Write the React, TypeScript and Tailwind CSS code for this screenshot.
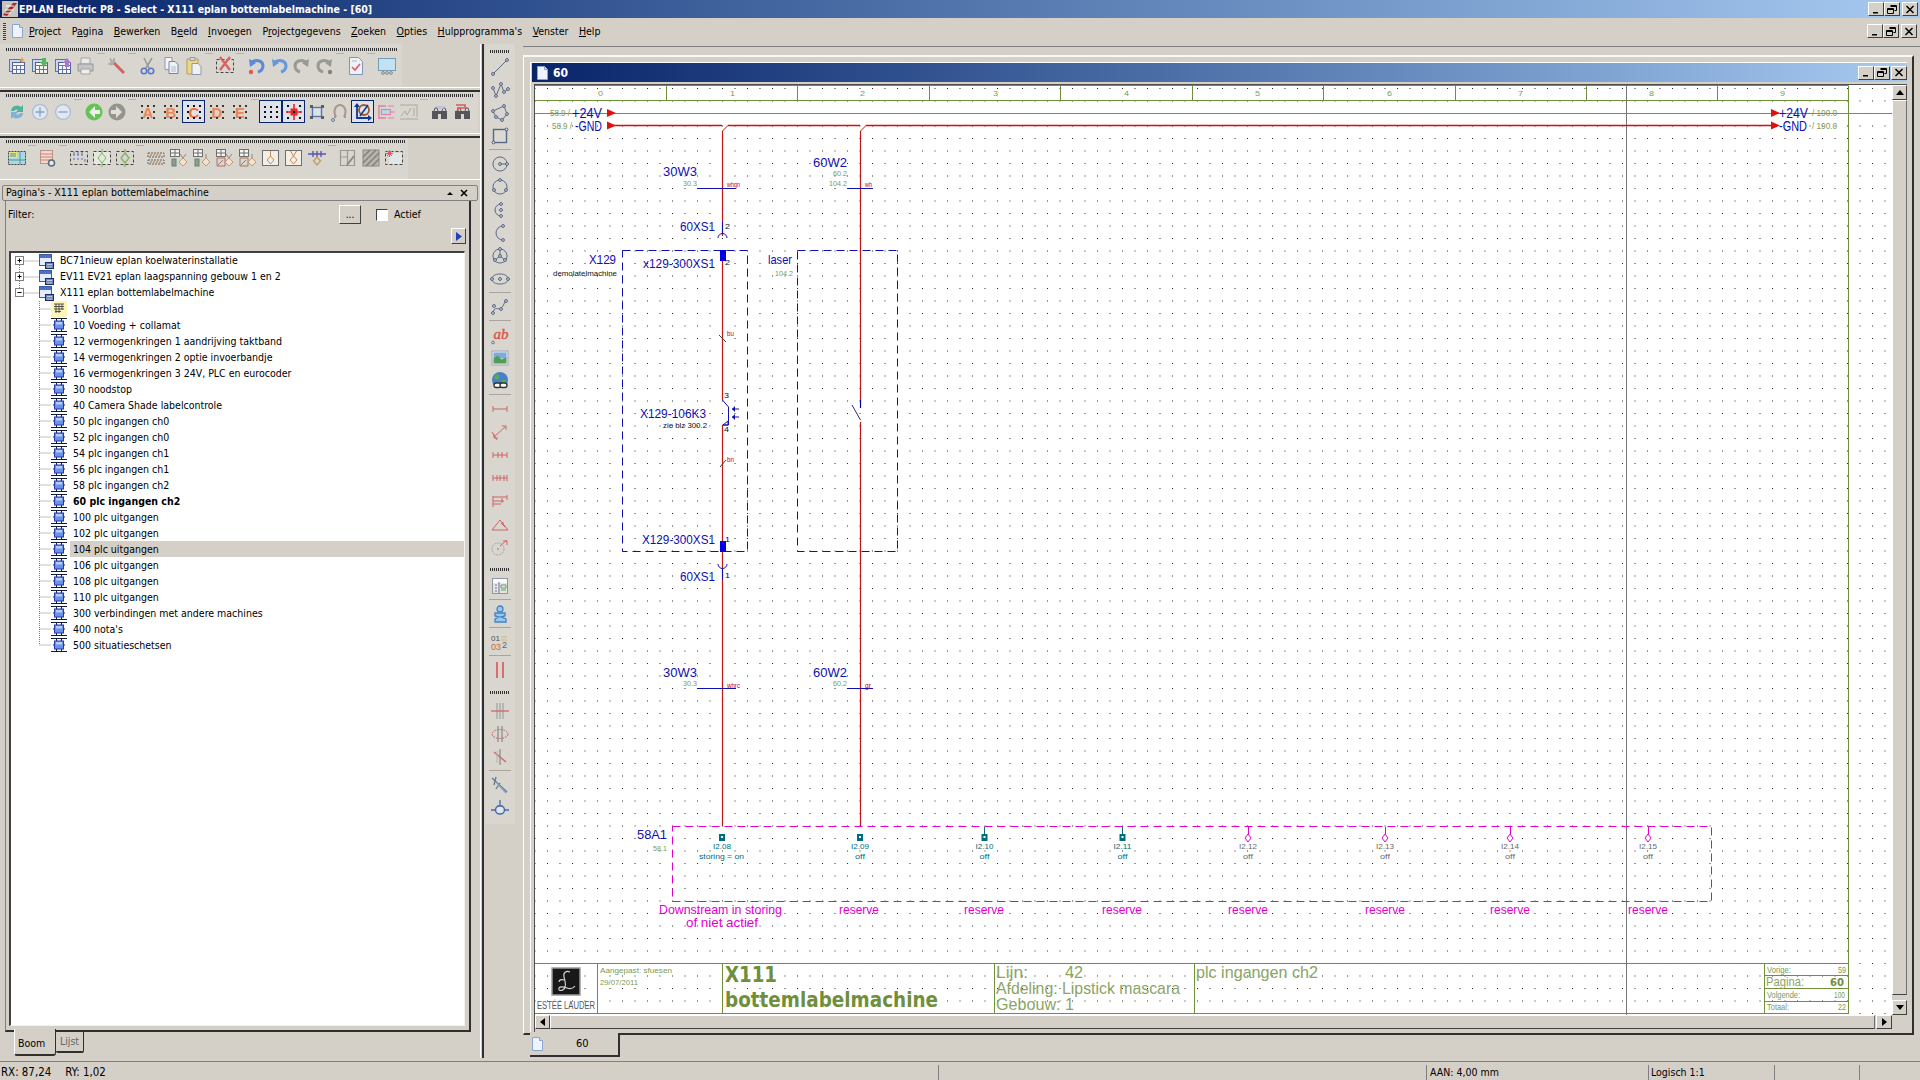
import type { ReactNode } from "react";

const BLUE = "#1010b0";
const GREEN = "#7c9a52";
const DGREEN = "#6f8f3a";
const LGREEN = "#8aa565";
const RED = "#cc0000";
const MAG = "#e000d0";
const TEAL = "#006c80";
const GRAY = "#686868";

function Ico({ children, size = 20 }: { children: ReactNode; size?: number }) {
  return (
    <svg width={size} height={size} viewBox="0 0 20 20" fill="none" className="block">
      {children}
    </svg>
  );
}

// ---- horizontal toolbar icons ----

const stack = (accent: ReactNode) => (
  <Ico>
    <rect x="2.5" y="3.5" width="11" height="12" fill="#c9d6ee" stroke="#3c5c9c" />
    <rect x="5.5" y="6.5" width="12" height="11" fill="#fff" stroke="#2c4488" />
    <path d="M5.5 9.5h12M9.5 9.5v8M13.5 9.5v8M5.5 13.5h12" stroke="#44619e" />
    {accent}
  </Ico>
);

const undo = (flip: boolean, color: string, dot?: string) => (
  <Ico>
    <g transform={flip ? "matrix(-1 0 0 1 20 0)" : undefined}>
      <path d="M6 6c5-3 11-1 11 4 0 3-2 5-5 6" stroke={color} strokeWidth="3" />
      <path d="M3 3l1 8 6-4z" fill={color} />
    </g>
    {dot && <circle cx={flip ? 15 : 5} cy="16" r="2.2" fill={dot} />}
  </Ico>
);

const letter = (c: string) => (
  <Ico>
    <text x="10" y="15.5" fontSize="15" fontWeight="700" textAnchor="middle" fill="#f0703a" fontFamily="Liberation Sans, sans-serif">
      {c}
    </text>
    <path d="M3 3h2v2H3zM9 3h2v2H9zM15 3h2v2h-2zM3 9h2v2H3zM15 9h2v2h-2zM3 15h2v2H3zM9 15h2v2H9zM15 15h2v2h-2z" fill="#111" />
  </Ico>
);

const binoculars = (flag?: boolean) => (
  <Ico>
    <rect x="2" y="9" width="6" height="8" fill="#33363f" />
    <rect x="11" y="9" width="6" height="8" fill="#33363f" />
    <rect x="7" y="9" width="5" height="3" fill="#33363f" />
    <path d="M4 9l1-3h2l1 3M12 9l1-3h2l1 3" stroke="#33363f" />
    {flag ? <path d="M3 3h9v3H5v3" stroke="#d04040" strokeWidth="1.6" /> : <path d="M6 4h10l-3 3H8z" fill="#b8bce0" />}
  </Ico>
);

const tableDiamond = (variant: number) => (
  <Ico>
    <rect x="1.5" y="1.5" width="9" height="7" fill="#fff" stroke="#555" />
    <path d="M6 1.5v7M1.5 5h9" stroke="#555" />
    {variant < 2 ? (
      <rect x="3" y="11" width="4" height="7" fill="#888" stroke="#3c7c4c" />
    ) : (
      <path d="M2 10h8v8H2z M3 17l5-5" stroke="#a05a50" />
    )}
    <path d="M14 10l4 4-4 4-4-4z" stroke="#c98a50" fill="#f4e8d8" />
    <path d={variant % 2 ? "M14 10V6" : "M11 6l3 4 3-4"} stroke="#777" />
  </Ico>
);

const boxDiamond = (up: boolean) => (
  <Ico>
    <rect x="1.5" y="2.5" width="16" height="15" fill="#faf6ec" stroke="#555" />
    <path d="M9.5 8l3.5 4-3.5 4L6 12z" stroke="#c07838" />
    <path d={up ? "M9.5 8l-3-5M9.5 8l3-5" : "M9.5 8V3"} stroke="#c07838" />
  </Ico>
);

const dashed = (inner: ReactNode) => (
  <Ico>
    <rect x="1.5" y="3.5" width="17" height="13" stroke="#222" strokeDasharray="3 2" />
    {inner}
  </Ico>
);

const toolbarOne: ReactNode[][] = [
  [
    stack(<path d="M15 1l1 2 2 1-2 1-1 2-1-2-2-1 2-1z" fill="#f09030" />),
    stack(<path d="M12 2h4v4h2l-4 5-4-5h2z" fill="#38b048" />),
    stack(<path d="M12 11h4V7h2l-4-5-4 5h2z" fill="#a060d0" />),
    <Ico>
      <path d="M5 2h9v6H5z" fill="#eef0f4" stroke="#999" />
      <path d="M2 8h15v7H2z" fill="#bfc2c8" stroke="#888" />
      <path d="M5 13h9v5H5z" fill="#f4f4f4" stroke="#999" />
    </Ico>,
  ],
  [
    <Ico>
      <path d="M6 6l11 11" stroke="#d04848" strokeWidth="3" />
      <path d="M3 2l3 3 1-3 1 4-3 3-4-1 3-1z" fill="#a8a8a8" stroke="#888" strokeWidth=".5" />
    </Ico>,
  ],
  [
    <Ico>
      <path d="M6 2l5 10M14 2L8 12" stroke="#888" strokeWidth="1.5" />
      <circle cx="6" cy="15" r="2.7" stroke="#3860c8" strokeWidth="1.6" />
      <circle cx="13" cy="15" r="2.7" stroke="#3860c8" strokeWidth="1.6" />
    </Ico>,
    <Ico>
      <path d="M4 1.5h7v12H4z" fill="#fff" stroke="#7a8aa8" />
      <path d="M8 5.5h6l3 3v9H8z" fill="#f4f8ff" stroke="#5470a8" />
      <path d="M10 11h5M10 13h5M10 15h5" stroke="#a4b4d0" />
    </Ico>,
    <Ico>
      <path d="M3 3h11v15H3z" fill="#f4d870" stroke="#b09040" />
      <path d="M6 1.500h5v3H6z" fill="#ddd" stroke="#888" />
      <path d="M8 7.500h6l3 3v8H8z" fill="#f8f8f8" stroke="#7a8ab0" />
    </Ico>,
  ],
  [dashed(<path d="M5 1l10 13M15 1L5 14" stroke="#d84848" strokeWidth="2.4" />)],
  [undo(false, "#3878d8", "#e83838"), undo(false, "#4888e0"), undo(true, "#8a8a88"), undo(true, "#8a8a88", "#707070")],
  [
    <Ico>
      <path d="M3.5 1.500h9l4 4v13h-13z" fill="#f4f8ff" stroke="#6a84b0" />
      <path d="M6 11l3 3 5-6" stroke="#d84058" strokeWidth="1.6" />
      <path d="M6 5h5" stroke="#a0b0cc" />
    </Ico>,
  ],
  [
    <Ico>
      <rect x="1.5" y="2.500" width="17" height="12" fill="#bfe4f8" stroke="#5a90b8" />
      <circle cx="6" cy="17" r="1.400" stroke="#777" />
      <circle cx="10" cy="17" r="1.400" stroke="#777" />
      <circle cx="14" cy="17" r="1.400" stroke="#777" />
    </Ico>,
  ],
];

const circleBtn = (sign: string) => (
  <Ico>
    <circle cx="10" cy="10" r="7.500" fill="#e4ecf6" stroke="#a8bcd8" strokeWidth="1.500" />
    <path d={sign} stroke="#6f92c8" strokeWidth="1.300" />
  </Ico>
);

const toolbarTwo: ReactNode[][] = [
  [
    <Ico>
      <path d="M4 9a6 6 0 0 1 10-4l2-2v7h-7l2-2a3 3 0 0 0-4 1z" fill="#2fa890" />
      <path d="M16 11a6 6 0 0 1-10 4l-2 2v-7h7l-2 2a3 3 0 0 0 4-1z" fill="#6aa8d8" />
    </Ico>,
    circleBtn("M10 5.500v9M5.500 10h9"),
    circleBtn("M5.500 10h9"),
  ],
  [
    <Ico>
      <circle cx="10" cy="10" r="8.500" fill="#48c038" />
      <path d="M11 4l-6 6 6 6v-4h5V8h-5z" fill="#f4f8f0" />
    </Ico>,
    <Ico>
      <circle cx="10" cy="10" r="8.500" fill="#85857f" />
      <path d="M9 4l6 6-6 6v-4H4V8h5z" fill="#e4e2dc" />
    </Ico>,
  ],
  [letter("A"), letter("B"), letter("C"), letter("D"), letter("E")],
  [
    <Ico>
      <path d="M3 4h2v2H3zM9 4h2v2H9zM15 4h2v2h-2zM3 9h2v2H3zM9 9h2v2H9zM15 9h2v2h-2zM3 14h2v2H3zM9 14h2v2H9zM15 14h2v2h-2z" fill="#111" />
    </Ico>,
    <Ico>
      <path d="M3 3h2v2H3zM15 3h2v2h-2zM3 15h2v2H3zM15 15h2v2h-2zM3 9h1v2H3zM16 9h1v2h-1z" fill="#111" />
      <path d="M2 10h16M10 2v16" stroke="#e82828" strokeWidth="1.600" />
      <rect x="6.500" y="6.500" width="7" height="7" fill="#e82828" />
      <rect x="9" y="9" width="2" height="2" fill="#111" />
    </Ico>,
    <Ico>
      <rect x="5.500" y="5.500" width="9" height="9" stroke="#3860a0" strokeWidth="1.400" fill="#dfe6f0" />
      <path d="M3 3h3v3H3zM14 3h3v3h-3zM3 14h3v3H3zM14 14h3v3h-3z" fill="#30405c" />
    </Ico>,
    <Ico>
      <path d="M6 15C2 7 7 3 10 3s8 4 4 12M6 15h-2M14 15h2" stroke="#a08878" strokeWidth="2" />
      <circle cx="3" cy="18" r="1.500" stroke="#4060a0" />
    </Ico>,
    <Ico>
      <path d="M4 3v13h13" stroke="#103890" strokeWidth="1.800" />
      <path d="M1 5l3-4 3 4zM15 13l4 3-4 3z" fill="#103890" />
      <circle cx="11" cy="8" r="5" stroke="#a05828" strokeWidth="1.800" />
      <path d="M7 14l8-11" stroke="#103890" strokeWidth="1.500" />
    </Ico>,
    <Ico>
      <path d="M3 3v14M3 4h7M3 16h7" stroke="#e86898" strokeWidth="1.400" />
      <rect x="5.500" y="7.500" width="9" height="5" fill="#a8d8f0" stroke="#e86898" />
      <path d="M14 10h5M12 4h6M12 16h6" stroke="#e86898" />
    </Ico>,
    <Ico>
      <path d="M1 3h18M1 17h18M2 14l4-5 2 4 4-7M15 6v8M18 4v11" stroke="#a0a098" />
    </Ico>,
  ],
  [binoculars(), binoculars(true)],
];

const toolbarThree: ReactNode[][] = [
  [
    <Ico>
      <rect x="1.500" y="3.500" width="17" height="13" stroke="#222" strokeDasharray="2 1" fill="#9fdde0" />
      <rect x="2" y="4" width="8" height="6" fill="#f0e860" />
      <path d="M3 6h6M3 8h6M13 4v12M2 12h16" stroke="#3a7c9c" />
    </Ico>,
  ],
  [
    <Ico>
      <rect x="2.500" y="2.500" width="12" height="13" fill="#f4dcd4" stroke="#a88878" />
      <path d="M2.500 6h12M2.500 9h12M2.500 12h12" stroke="#d86858" />
      <circle cx="13.500" cy="15" r="3" fill="#e8ecf0" stroke="#38506c" strokeWidth="1.500" />
    </Ico>,
  ],
  [
    dashed(<path d="M4 7h2M8 7h2M12 7h2M4 11h2M8 11h2M12 11h2M16 11v3M5 4v3M9 4v3M13 4v3" stroke="#3858b8" />),
    dashed(
      <>
        <rect x="2" y="4" width="16" height="12" fill="#e8f0e4" />
        <path d="M10 5l4 5-4 5-4-5zM10 1v4M10 15v4" stroke="#6fa848" />
      </>,
    ),
    dashed(<path d="M10 5l4 5-4 5-4-5zM10 1v4M10 15v4" stroke="#6fa848" strokeWidth="1.300" />),
  ],
  [
    <Ico>
      <path d="M2 5h16v4H2zM2 12h16v4H2z" stroke="#444" strokeDasharray="2 1" />
      <path d="M4 7h12M4 14h12" stroke="#d07838" strokeDasharray="2 1" strokeWidth="1.400" />
    </Ico>,
    tableDiamond(0),
    tableDiamond(1),
    tableDiamond(2),
    tableDiamond(3),
    boxDiamond(false),
    boxDiamond(true),
    <Ico>
      <path d="M1 6h18M6 3v6M10 3v6M14 3v6" stroke="#3838a8" strokeWidth="1.400" />
      <path d="M10 9l3.500 4-3.500 4-3.500-4z" stroke="#c09048" strokeWidth="1.400" />
    </Ico>,
  ],
  [
    <Ico>
      <path d="M2.500 2.500h14v15h-14zM2.500 9h7M9.500 2.500v15" stroke="#8a8a84" strokeWidth="1.200" />
      <path d="M9 17l7-9" stroke="#777" strokeWidth="2" />
    </Ico>,
    <Ico>
      <rect x="2" y="2" width="16" height="16" fill="#b0aea8" stroke="#777" />
      <path d="M2 9l7-7M2 15l13-13M5 18L18 5M11 18l7-7" stroke="#6f6f69" strokeWidth="1.600" />
    </Ico>,
    dashed(
      <>
        <rect x="5" y="5" width="13" height="11" fill="#e4eaf0" />
        <path d="M3 3l5 5M8 3L3 8M5.500 2v7M2 5.500h7" stroke="#e83848" />
      </>,
    ),
  ],
];

// ---- vertical toolbar icons ----

const VS = "#4c5d80";
const node = (x: number, y: number) => <circle cx={x} cy={y} r="1.400" fill="#e4e8f0" stroke="#3c4c70" />;

const v = (d: string, nodes: number[][], extra?: ReactNode) => (
  <Ico>
    <path d={d} stroke={VS} />
    {extra}
    {nodes.map(([x, y], i) => (
      <g key={i}>{node(x, y)}</g>
    ))}
  </Ico>
);

const dim = (d: string) => (
  <Ico>
    <path d={d} stroke="#d05858" />
  </Ico>
);

const groupOne: ReactNode[] = [
  v("M3 17L17 3", [[3, 17], [17, 3]]),
  v("M3 8l3 8 5-12 3 8 4-3", [[3, 8], [6, 16], [11, 4], [14, 12], [18, 9]]),
  v("M3 8l11-5 3 8-5 6-6-3z", [[3, 8], [14, 3], [17, 11], [12, 17], [6, 14]]),
  <Ico>
    <rect x="3.500" y="3.500" width="13" height="13" fill="#dcdad4" stroke={VS} strokeWidth="1.400" />
    {node(16.5, 3.5)}
    {node(3.5, 16.5)}
  </Ico>,
];
const groupTwo: ReactNode[] = [
  v("M10 3a7 7 0 1 1-.01 0M10 10h7", [[10, 10], [17, 10]]),
  v("M10 3a7 7 0 1 1-.01 0", [[10, 3], [4, 13], [16, 13]]),
  v("M11 4a6 6 0 0 0 0 12", [[11, 4], [11, 10], [11, 16]]),
  v("M13 3a7 7 0 0 0 0 14", [[13, 3], [13, 17]]),
  v("M10 3a7 7 0 1 1-.01 0M10 3v7l-5 4M10 10l5 4", [[10, 3], [10, 10], [5, 14], [15, 14]]),
  v("M10 5c5 0 8 2 8 5s-3 5-8 5-8-2-8-5 3-5 8-5z", [[2, 10], [10, 10], [18, 10]]),
];
const groupThree: ReactNode[] = [v("M3 16c1-7 5-3 8-5s3-6 5-7", [[3, 16], [4, 9], [11, 12], [16, 4]])];
const groupFour: ReactNode[] = [
  <Ico>
    <text x="11" y="14" fontSize="15" fontWeight="400" fontStyle="italic" textAnchor="middle" fill="#d84838" stroke="#d84838" strokeWidth=".4" fontFamily="Liberation Serif, serif">
      ab
    </text>
    <circle cx="3" cy="17.500" r="1.400" stroke="#5070a0" />
  </Ico>,
  <Ico>
    <rect x="2" y="3" width="16" height="14" fill="#eee" stroke="#98a0ac" />
    <rect x="3.500" y="4.500" width="13" height="6" fill="#70a8e0" />
    <path d="M3.500 15.500v-5l4-3 4 4 5-2v6z" fill="#3f9848" />
  </Ico>,
  <Ico>
    <circle cx="10" cy="9" r="8" fill="#3a78c8" />
    <path d="M5 4c3-2 5 1 4 3s-4 2-5 0zM12 9c3-1 5 0 4 3l-4 2z" fill="#48a848" />
    <rect x="4" y="12" width="7" height="4.500" rx="2.200" stroke="#222" strokeWidth="1.300" fill="#fff" />
    <rect x="10" y="12" width="7" height="4.500" rx="2.200" stroke="#222" strokeWidth="1.300" fill="#fff" />
  </Ico>,
];
const groupFive: ReactNode[] = [
  dim("M3 7v6M17 7v6M3 10h14"),
  dim("M4 15L15 5M12 4l4 0 0 4M4 12l0 4 4 0M2 10l5 8"),
  dim("M3 7v6M8 7v6M12 7v6M17 7v6M3 10h14"),
  dim("M3 7v6M7 7v6M10 7v6M14 7v6M17 7v6M3 10h14"),
  dim("M3 5v11M17 4v5M3 6h14M3 10h11M3 13h8M12 7v5"),
  dim("M2 16h16L10 6zM11 9l4 4M13 8v3"),
  <Ico>
    <circle cx="8" cy="12" r="6" stroke="#a0a0a0" strokeDasharray="2 1" />
    <circle cx="8" cy="12" r=".8" fill="#666" />
    <path d="M10 9l7-6M13 4h4v4" stroke="#d05858" />
  </Ico>,
];
const groupSix: ReactNode[] = [
  <Ico>
    <rect x="2.500" y="2.500" width="15" height="15" fill="#e8e8e4" stroke="#8890a0" />
    <path d="M3 3h14v4H3z" fill="#fff" />
    <path d="M9 6v11M5 9h2M5 12h2M5 15h2" stroke="#5a6a8a" />
    <path d="M11 9h5v3h-5zM11 14h5" stroke="#48a060" />
  </Ico>,
];
const groupSeven: ReactNode[] = [
  <Ico>
    <circle cx="10" cy="5" r="3" fill="#90c8f0" stroke="#3878c0" strokeWidth="1.300" />
    <path d="M5 9h10v3l-4 1 5 2v3H5v-3l4-2-4-1z" fill="#90c8f0" stroke="#3878c0" strokeWidth="1.300" />
  </Ico>,
];
const groupEight: ReactNode[] = [
  <Ico>
    <text x="1" y="9" fontSize="8" fill="#444" fontFamily="Liberation Sans, sans-serif">01</text>
    <text x="1" y="18" fontSize="9" fill="#c06030" fontFamily="Liberation Sans, sans-serif">03</text>
    <text x="12" y="16" fontSize="9" fill="#3858a8" fontFamily="Liberation Sans, sans-serif">2</text>
    <path d="M11 5h6M11 8h6" stroke="#d8b838" strokeWidth="1.200" />
  </Ico>,
];
const groupNine: ReactNode[] = [
  <Ico>
    <path d="M7 2v16M13 2v16" stroke="#d84848" strokeWidth="1.600" />
  </Ico>,
];
const groupTen: ReactNode[] = [
  <Ico>
    <path d="M7 2v16M10 2v16M13 2v16" stroke="#909090" />
    <path d="M1 10h18" stroke="#d05858" strokeWidth="1.300" />
  </Ico>,
  <Ico>
    <ellipse cx="10" cy="10" rx="8" ry="4.500" stroke="#d05858" strokeDasharray="2 1" />
    <path d="M8 2v16M12 2v16" stroke="#707070" />
  </Ico>,
  <Ico>
    <path d="M10 2v16" stroke="#707070" />
    <path d="M4 5l12 10" stroke="#d05858" strokeWidth="1.300" />
    <path d="M7 4v12" stroke="#b0b0b0" />
  </Ico>,
];
const groupEleven: ReactNode[] = [
  <Ico>
    <path d="M2 3l15 14M6 2l-2 8M10 8l-4 6" stroke="#5c6c88" strokeWidth="1.300" />
    <path d="M6 7l10 11" stroke="#70a0c8" strokeWidth="1.300" />
  </Ico>,
  <Ico>
    <path d="M10 2v6M1 12h18" stroke="#3860a8" strokeWidth="1.300" />
    <ellipse cx="10" cy="12" rx="4.500" ry="4" fill="#e0e8f4" stroke="#3860a8" strokeWidth="1.500" />
    <path d="M7 8h6" stroke="#5070a8" strokeWidth="1.600" />
  </Ico>,
];

// ---- window chrome ----

function CapBtn({ kind }: { kind: "min" | "max" | "close" }) {
  return (
    <div className="grid h-[14px] w-[16px] place-items-center border border-t-white border-l-white border-r-[#404040] border-b-[#404040] bg-[#d4d0c8]">
      <svg width="10" height="9" viewBox="0 0 10 9" className="block">
        {kind === "min" && <path d="M2 7h5v1.500H2z" fill="#000" />}
        {kind === "max" && <path d="M3.500.5h6v5h-2M.5 3.500h6v5h-6zM3.500 1.500h6M.5 4.500h6" stroke="#000" fill="none" />}
        {kind === "close" && <path d="M1.500 1l7 7M8.500 1l-7 7" stroke="#000" strokeWidth="1.500" />}
      </svg>
    </div>
  );
}

function CapBtns({ gap }: { gap: string }) {
  return (
    <div className="flex items-center">
      <CapBtn kind="min" />
      <CapBtn kind="max" />
      <div className={gap} />
      <CapBtn kind="close" />
    </div>
  );
}

function ArrowBtn({ dir, className }: { dir: "up" | "down" | "left" | "right"; className: string }) {
  const d = { up: "M4 1l4 5H0z", down: "M0 1h8L4 6z", left: "M6 0v8L1 4z", right: "M2 0v8l5-4z" }[dir];
  return (
    <div className={`grid shrink-0 place-items-center border border-t-white border-l-white border-r-[#404040] border-b-[#404040] bg-[#d4d0c8] ${className}`}>
      <svg width="8" height="8" viewBox="0 0 8 8" className="block">
        <path d={d} fill="#000" />
      </svg>
    </div>
  );
}

function DocIcon() {
  return (
    <svg width="11" height="14" viewBox="0 0 11 14" className="block">
      <path d="M.5.500h7l3 3v10H.5z" fill="#eef4ff" stroke="#8aa4d0" />
      <path d="M7.500.500v3h3" fill="#cfe0f8" stroke="#8aa4d0" />
    </svg>
  );
}

const Grip = ({ className }: { className: string }) => (
  <div className={`h-[3px] bg-[repeating-linear-gradient(90deg,#303030_0,#303030_1px,transparent_1px,transparent_2px)] ${className}`} />
);

function Toolbar({ groups, band, grip, first, active }: { groups: ReactNode[][]; band: string; grip: string; first?: boolean; active: number[] }) {
  let index = -1;
  return (
    <div className={`h-[46px] shrink-0 ${first ? "" : "border-t-2 border-[#303030]"}`}>
      <div className={`flex flex-col ${band} ${first ? "h-[43px] pt-[4px]" : "h-[41px] pt-[2px]"} bg-[#d9d6cf]`}>
        <Grip className={grip} />
        <div className="mt-[3px] flex pl-[5px]">
          {groups.map((group, g) => (
            <div key={g} className="flex">
              {g > 0 && <div className="mt-[-1px] h-px w-[8px] bg-[#b4b1a9]" />}
              {group.map((icon, i) => {
                index += 1;
                const on = active.includes(index);
                return (
                  <div
                    key={i}
                    className={`grid h-[23px] w-[23px] place-items-center ${on ? "border border-[#0a246a] bg-[#dfe2e8]" : "opacity-80"}`}
                  >
                    {icon}
                  </div>
                );
              })}
            </div>
          ))}
        </div>
      </div>
      <div className="h-px bg-white" />
    </div>
  );
}

const Slot = ({ children }: { children: ReactNode }) => <div className="grid h-[23px] place-items-center opacity-90">{children}</div>;
const VSep = () => (
  <div className="flex h-[5px] items-center justify-center">
    <div className="h-px w-[22px] bg-[#a8a59d]" />
  </div>
);

function VGroups({ groups }: { groups: ReactNode[][] }) {
  return (
    <>
      {groups.map((g, i) => (
        <div key={i}>
          {i > 0 && <VSep />}
          {g.map((icon, j) => (
            <Slot key={j}>{icon}</Slot>
          ))}
        </div>
      ))}
    </>
  );
}

// ---- tree ----

const menu = [
  ["", "P", "roject"],
  ["P", "a", "gina"],
  ["", "B", "ewerken"],
  ["B", "e", "eld"],
  ["", "I", "nvoegen"],
  ["P", "r", "ojectgegevens"],
  ["", "Z", "oeken"],
  ["", "O", "pties"],
  ["", "H", "ulpprogramma's"],
  ["", "V", "enster"],
  ["", "H", "elp"],
];

const projects = [
  { label: "BC71nieuw eplan koelwaterinstallatie", open: false },
  { label: "EV11 EV21 eplan laagspanning gebouw 1 en 2", open: false },
  { label: "X111 eplan bottemlabelmachine", open: true },
];

const pages = [
  "1 Voorblad",
  "10 Voeding + collamat",
  "12 vermogenkringen 1 aandrijving taktband",
  "14 vermogenkringen 2 optie invoerbandje",
  "16 vermogenkringen 3 24V, PLC en eurocoder",
  "30 noodstop",
  "40 Camera Shade labelcontrole",
  "50 plc ingangen ch0",
  "52 plc ingangen ch0",
  "54 plc ingangen ch1",
  "56 plc ingangen ch1",
  "58 plc ingangen ch2",
  "60 plc ingangen ch2",
  "100 plc uitgangen",
  "102 plc uitgangen",
  "104 plc uitgangen",
  "106 plc uitgangen",
  "108 plc uitgangen",
  "110 plc uitgangen",
  "300 verbindingen met andere machines",
  "400 nota's",
  "500 situatieschetsen",
];

function ProjectRow({ label, open, index }: { label: string; open: boolean; index: number }) {
  return (
    <div className="flex h-4 items-center">
      <svg width="28" height="16" viewBox="0 0 28 16" className="block shrink-0">
        <path d={`M8.500 ${index === 0 ? 8 : 0}V${open ? 8 : 16}M8.500 8H28`} stroke="#808080" strokeDasharray="1 1" />
        <rect x="4.500" y="3.500" width="8" height="8" fill="#fff" stroke="#808080" />
        <path d={open ? "M6.500 7.500h4" : "M6.500 7.500h4M8.500 5.500v4"} stroke="#000" />
      </svg>
      <svg width="15" height="15" viewBox="0 0 15 15" className="block shrink-0">
        <rect x="0.500" y="0.500" width="12" height="11" fill="#e4ecfa" stroke="#3a5aa8" />
        <rect x="1" y="1" width="11" height="3" fill="#4a70c8" />
        <rect x="6.500" y="8.500" width="8" height="6" fill="#6a84c0" stroke="#1c2c68" />
        <path d="M8 10l1 1 1-1 1 1 1-1 1 1M8 12.500l1 1 1-1 1 1 1-1 1 1" stroke="#fff" strokeWidth=".6" fill="none" />
      </svg>
      <span className="ml-[6px] whitespace-nowrap">{label}</span>
    </div>
  );
}

function PageIcon({ cover }: { cover: boolean }) {
  if (cover) {
    return (
      <svg width="16" height="16" viewBox="0 0 16 16" className="block shrink-0">
        <rect width="16" height="16" fill="#fbf6b8" />
        <path d="M3 3h10M3 5.500h10M3 8h10M4 10.500h6M5 3v9M8 3v9M11 3v6" stroke="#55504a" fill="none" />
      </svg>
    );
  }
  return (
    <svg width="16" height="16" viewBox="0 0 16 16" className="block shrink-0">
      <path d="M0 1.500h16M0 14.500h16M5.500 1v3M10.500 1v3M5.500 12v3M10.500 12v3M2 8h12" stroke="#10183c" fill="none" />
      <rect x="3.500" y="4" width="9" height="8" fill="#6a92ea" stroke="#2038b0" />
      <rect x="5" y="5" width="6" height="2.500" fill="#b8ccf8" />
    </svg>
  );
}

function PageRow({ label, last, bold, selected, cover }: { label: string; last: boolean; bold: boolean; selected: boolean; cover: boolean }) {
  return (
    <div className="flex h-4 items-center">
      <svg width="40" height="16" viewBox="0 0 40 16" className="block shrink-0">
        <path d={`M28.500 0V${last ? 8 : 16}M28.500 8H40`} stroke="#808080" strokeDasharray="1 1" fill="none" />
      </svg>
      <PageIcon cover={cover} />
      <div className={`ml-[3px] h-4 flex-1 pl-[3px] leading-4 whitespace-nowrap ${selected ? "bg-[#d4d0c8]" : ""} ${bold ? "font-bold" : ""}`}>{label}</div>
    </div>
  );
}

// ---- schematic ----

type TP = { x: number; y: number; w: number; c: string; s?: number; b?: boolean; f?: string; children: ReactNode };

function T({ x, y, w, c, s = 13, b, f = "Liberation Sans, sans-serif", children }: TP) {
  return (
    <text x={x} y={y} textLength={w} lengthAdjust="spacingAndGlyphs" fontSize={s} fill={c} fontWeight={b ? 700 : 400} fontFamily={f} dominantBaseline="central">
      {children}
    </text>
  );
}

const ticks = [666, 797, 929, 1060, 1192, 1323, 1455, 1586, 1717];
const rulerCenters = [600, 732, 862, 995, 1126, 1257, 1389, 1520, 1651, 1782];
const terminalsOn = [
  { x: 722, l: "I2.08", live: true },
  { x: 860, l: "I2.09", live: true },
  { x: 984.5, l: "I2.10", live: false },
  { x: 1122.5, l: "I2.11", live: false },
];
const terminalsOff = [
  { x: 1248, l: "I2.12" },
  { x: 1385, l: "I2.13" },
  { x: 1510, l: "I2.14" },
  { x: 1648, l: "I2.15" },
];

function Schematic() {
  return (
    <svg width="1357" height="930" viewBox="535 85 1357 930" className="block shrink-0 bg-white">
      <defs>
        <pattern id="dots" x="547" y="88" width="12.5" height="12.5" patternUnits="userSpaceOnUse">
          <rect width="1" height="1" fill="#222" />
        </pattern>
      </defs>
      <rect x="535" y="85" width="1357" height="930" fill="url(#dots)" />

      {/* sheet frame */}
      <path d="M535 85.500H1848.500V1014M535 100.500H1848.500" stroke={DGREEN} fill="none" />
      {ticks.map((x) => (
        <path key={x} d={`M${x}.5 85v15`} stroke={DGREEN} />
      ))}
      {rulerCenters.map((x, i) => (
        <T key={x} x={x - 2} y={93} w={5} c={GREEN} s={8}>
          {i}
        </T>
      ))}
      <path d="M1626.500 85v930" stroke="#777" />

      {/* potential lines */}
      <path d="M535 113.500H1892" stroke="#808078" />
      <path d="M610 125.500H722M728 125.500H860M866 125.500H1776" stroke="#d01010" strokeWidth="1.300" />
      <path d="M722.500 131l6-6M860.500 131l6-6" stroke="#d01010" />
      <path d="M607 109l9 4-9 4zM607 121.500l9 4-9 4zM1771 109l9 4-9 4zM1771 121.500l9 4-9 4z" fill="#e01010" />
      <T x={550} y={113} w={20} c={GREEN} s={9}>58.9 /</T>
      <T x={552} y={125.5} w={20} c={GREEN} s={9}>58.9 /</T>
      <T x={572} y={113} w={30} c={BLUE} s={14}>+24V</T>
      <T x={575} y={125.5} w={27} c={BLUE} s={14}>-GND</T>
      <T x={1779} y={113} w={29} c={BLUE} s={14}>+24V</T>
      <T x={1779} y={125.5} w={28} c={BLUE} s={14}>-GND</T>
      <T x={1812} y={113} w={25} c={GREEN} s={9}>/ 100.0</T>
      <T x={1812} y={125.5} w={25} c={GREEN} s={9}>/ 190.0</T>

      {/* wires */}
      <path d="M722.500 131V236M722.500 250V400M722.500 425V826" stroke="#c01818" strokeWidth="1.200" />
      <path d="M860.500 131V408M860.500 422V826" stroke="#c01818" strokeWidth="1.200" />
      <path d="M860.500 400v8" stroke="#0000a8" />

      {/* cables */}
      <path d="M697 188.500h39M847 188.500h26M697 688.500h39M847 688.500h26" stroke={BLUE} />
      <T x={663} y={171} w={34} c={BLUE}>30W3</T>
      <T x={683} y={183} w={14} c={GREEN} s={8}>30.3</T>
      <T x={727} y={184} w={13} c={RED} s={7}>whgn</T>
      <T x={813} y={162} w={34} c={BLUE}>60W2</T>
      <T x={833} y={173} w={14} c={GREEN} s={8}>60.2</T>
      <T x={829} y={183} w={18} c={GREEN} s={8}>104.2</T>
      <T x={865} y={184} w={7} c={RED} s={7}>wh</T>
      <T x={663} y={672} w={34} c={BLUE}>30W3</T>
      <T x={683} y={683} w={14} c={GREEN} s={8}>30.3</T>
      <T x={727} y={685} w={13} c={RED} s={7}>whrc</T>
      <T x={813} y={672} w={34} c={BLUE}>60W2</T>
      <T x={833} y={683} w={14} c={GREEN} s={8}>60.2</T>
      <T x={865} y={685} w={6} c={RED} s={7}>gr</T>

      {/* plug top */}
      <path d="M722.500 222v12M718 238a4.500 4.500 0 0 1 9 0" stroke={BLUE} fill="none" />
      <T x={680} y={226} w={35} c={BLUE}>60XS1</T>
      <T x={725} y={226} w={5} c="#111" s={8}>2</T>

      {/* device boxes */}
      <rect x="622.500" y="250.500" width="125" height="301" stroke={BLUE} strokeDasharray="8 5" fill="none" />
      <rect x="797.500" y="250.500" width="100" height="301" stroke={BLUE} strokeDasharray="8 5" fill="none" />
      <T x={589} y={259} w={27} c={BLUE}>X129</T>
      <T x={553} y={273} w={64} c="#111" s={8}>demolatelmachine</T>
      <T x={643} y={263} w={72} c={BLUE}>x129-300XS1</T>
      <rect x="720" y="250" width="6" height="11" fill="#0000e0" />
      <T x={725} y={262} w={5} c="#111" s={8}>2</T>
      <T x={768} y={259} w={24} c={BLUE}>laser</T>
      <T x={775} y={273} w={18} c={GREEN} s={8}>104.2</T>

      {/* wire colours */}
      <path d="M719 335l7 7M720 467l6-7" stroke="#444" />
      <T x={727} y={333} w={7} c={RED} s={7}>bu</T>
      <T x={727} y={459} w={7} c={RED} s={7}>bn</T>

      {/* contact K3 */}
      <path d="M722.500 400l6 7v18h-6" stroke={BLUE} fill="none" />
      <path d="M723 425l5-4v4zM732 409h7M732 417h7" stroke={BLUE} fill="none" />
      <path d="M735 406l-3 3 3 3zM735 414l-3 3 3 3z" fill={BLUE} />
      <T x={724} y={395} w={5} c="#111" s={8}>3</T>
      <T x={724} y={429} w={5} c="#111" s={8}>4</T>
      <T x={640} y={413} w={66} c={BLUE}>X129-106K3</T>
      <T x={663} y={425} w={44} c="#111" s={8}>zie blz 300.2</T>

      {/* switch in laser box */}
      <path d="M852 405l8.500 15" stroke="#2a2a80" />

      {/* plug bottom */}
      <T x={642} y={539} w={73} c={BLUE}>X129-300XS1</T>
      <rect x="720" y="541" width="6" height="11" fill="#0000e0" />
      <T x={725} y={539} w={5} c="#111" s={8}>1</T>
      <path d="M718 564a4.500 4.500 0 0 0 9 0M722.500 568v12" stroke={BLUE} fill="none" />
      <T x={680} y={576} w={35} c={BLUE}>60XS1</T>
      <T x={725} y={575} w={5} c="#111" s={8}>1</T>

      {/* plc card */}
      <rect x="672.500" y="826.500" width="1039" height="75" stroke={MAG} strokeDasharray="8 5" fill="none" />
      <T x={637} y={834} w={30} c={BLUE}>58A1</T>
      <T x={653} y={848} w={14} c={GREEN} s={8}>58.1</T>
      {terminalsOn.map((t) => (
        <g key={t.l}>
          {!t.live && <path d={`M${t.x} 827v7`} stroke={TEAL} />}
          <rect x={t.x - 3} y={834} width="6" height="7" fill={TEAL} />
          <rect x={t.x - 1} y={836} width="2" height="2" fill="#fff" />
          <T x={t.x - 9} y={846} w={18} c={TEAL} s={8}>{t.l}</T>
          {t.live && t.x === 722 ? (
            <T x={699} y={856} w={45} c={TEAL} s={8}>storing = on</T>
          ) : (
            <T x={t.x - 5} y={856} w={10} c={TEAL} s={8}>off</T>
          )}
        </g>
      ))}
      {terminalsOff.map((t) => (
        <g key={t.l}>
          <path d={`M${t.x}.5 827v7`} stroke={MAG} />
          <path d={`M${t.x} 834l3 4-3 4-3-4z`} stroke={MAG} fill="#fff" />
          <T x={t.x - 9} y={846} w={18} c={GRAY} s={8}>{t.l}</T>
          <T x={t.x - 5} y={856} w={10} c={GRAY} s={8}>off</T>
        </g>
      ))}
      <T x={659} y={909} w={123} c={MAG}>Downstream in storing</T>
      <T x={686} y={922.5} w={72} c={MAG}>of niet actief</T>
      {[859, 984, 1122, 1248, 1385, 1510, 1648].map((x) => (
        <T key={x} x={x - 20} y={909} w={40} c={MAG}>
          reserve
        </T>
      ))}

      {/* title block */}
      <path d="M535 963.500H1848M535 1013.500H1848M597.500 963v50M722.500 963v50M994.500 963v50M1194.500 963v50M1764.500 963v50M1764 975.500h84M1764 988.500h84M1764 1001.500h84" stroke={DGREEN} fill="none" />
      <rect x="552" y="968" width="28" height="27" fill="#181818" stroke="#9a9a9a" strokeWidth="1.500" />
      <path d="M570 972c-4-2-7 1-6 5s3 9 0 12-6 1-5-1 5-1 8 0 6 1 8-2M564 980c-3-1-5 0-5 2" stroke="#d8d8d8" strokeWidth="1.100" fill="none" />
      <T x={537} y={1005} w={58} c="#555" s={10}>ESTÉE LAUDER</T>
      <T x={600} y={970} w={72} c={GREEN} s={8}>Aangepast: sfuesen</T>
      <T x={600} y={982} w={38} c={GREEN} s={8}>29/07/2011</T>
      <T x={725} y={975} w={52} c={DGREEN} s={21} b f="DejaVu Sans, sans-serif">X111</T>
      <T x={725} y={1000} w={213} c={DGREEN} s={21} b f="DejaVu Sans, sans-serif">bottemlabelmachine</T>
      <T x={996} y={972} w={32} c={LGREEN} s={17}>Lijn:</T>
      <T x={1065} y={972} w={18} c={LGREEN} s={17}>42</T>
      <T x={996} y={988} w={184} c={LGREEN} s={17}>Afdeling: Lipstick mascara</T>
      <T x={996} y={1004} w={78} c={LGREEN} s={17}>Gebouw: 1</T>
      <T x={1196} y={972} w={122} c={LGREEN} s={17}>plc ingangen ch2</T>
      <T x={1767} y={970} w={24} c={GREEN} s={9}>Vorige:</T>
      <T x={1838} y={970} w={8} c={GREEN} s={9}>59</T>
      <T x={1766} y={981} w={38} c={LGREEN} s={13}>Pagina:</T>
      <T x={1830} y={982} w={14} c={DGREEN} s={11} b f="DejaVu Sans, sans-serif">60</T>
      <T x={1767} y={995} w={33} c={GREEN} s={9}>Volgende:</T>
      <T x={1834} y={995} w={11} c={GREEN} s={9}>100</T>
      <T x={1767} y={1007} w={22} c={GREEN} s={9}>Totaal:</T>
      <T x={1838} y={1007} w={8} c={GREEN} s={9}>22</T>
    </svg>
  );
}

export default function App() {
  return (
    <div className="flex h-[1080px] w-[1920px] flex-col overflow-hidden bg-[#d4d0c8] font-['DejaVu_Sans_Condensed','Liberation_Sans',sans-serif] text-[10.5px] text-black">
      {/* title bar */}
      <div className="flex h-[18px] shrink-0 items-center bg-gradient-to-r from-[#0a246a] to-[#a6caf0] pr-[2px] pl-[2px]">
        <svg width="16" height="16" viewBox="0 0 16 16" className="block shrink-0">
          <rect width="16" height="16" fill="#c8c4bc" />
          <path d="M1 14L11 2h4L5 15z" fill="#a02828" />
          <path d="M4 5h8M3 9h9M3 12h6" stroke="#fff" />
        </svg>
        <span className="mt-px ml-px text-[10.5px] font-bold whitespace-nowrap text-white">EPLAN Electric P8 - Select - X111 eplan bottemlabelmachine - [60]</span>
        <div className="ml-auto">
          <CapBtns gap="w-[2px]" />
        </div>
      </div>

      {/* menu bar */}
      <div className="flex h-[26px] shrink-0 items-center pr-[3px] pl-[3px]">
        <div className="h-[18px] w-[3px] bg-[repeating-linear-gradient(0deg,#404040_0,#404040_1px,transparent_1px,transparent_2px)]" />
        <div className="ml-[6px] shrink-0">
          <DocIcon />
        </div>
        <div className="mt-[2px] ml-[6px] flex gap-[10.5px]">
          {menu.map(([a, u, b]) => (
            <span key={a + u + b} className="whitespace-nowrap">
              {a}
              <span className="underline">{u}</span>
              {b}
            </span>
          ))}
        </div>
        <div className="ml-auto">
          <CapBtns gap="w-[2px]" />
        </div>
      </div>

      <div className="flex min-h-0 flex-1">
        {/* left column */}
        <div className="flex w-[480px] shrink-0 flex-col">
          <Toolbar first groups={toolbarOne} band="w-[402px]" grip="ml-[6px] w-[391px]" active={[]} />
          <Toolbar groups={toolbarTwo} band="w-[478px]" grip="ml-[6px] w-[467px]" active={[7, 10, 11, 14]} />
          <Toolbar groups={toolbarThree} band="w-[408px]" grip="ml-[6px] w-[399px]" active={[]} />

          <div className="mx-[2px] mt-[3px] flex h-[16px] shrink-0 items-center rounded-[2px] border border-[#808080] pr-[3px] pl-[3px]">
            <span>Pagina's - X111 eplan bottemlabelmachine</span>
            <svg width="30" height="10" viewBox="0 0 30 10" className="ml-auto block">
              <path d="M3 7l3-3 3 3z" fill="#000" />
              <path d="M17 2l6 6M23 2l-6 6" stroke="#000" strokeWidth="1.500" />
            </svg>
          </div>

          <div className="ml-[5px] flex h-[831px] w-[466px] shrink-0 flex-col border-r-2 border-b-2 border-l border-r-[#303030] border-b-[#303030] border-l-[#808080] pb-[4px]">
            <div className="mt-[4px] flex h-[19px] shrink-0 items-center pl-[2px]">
              <span className="w-[331px]">Filter:</span>
              <div className="grid h-[19px] w-[22px] place-items-center border border-t-white border-l-white border-r-[#404040] border-b-[#404040] text-[10px]">...</div>
              <div className="ml-[15px] h-[12px] w-[12px] border border-t-[#404040] border-l-[#404040] border-r-white border-b-white bg-white" />
              <span className="ml-[6px]">Actief</span>
            </div>
            <div className="mt-[4px] flex shrink-0 justify-end pr-[3px]">
              <div className="grid h-[16px] w-[15px] place-items-center border border-t-white border-l-white border-r-[#404040] border-b-[#404040]">
                <svg width="9" height="9" viewBox="0 0 9 9" className="block">
                  <path d="M2 0l6 4.500L2 9z" fill="#2040c0" />
                </svg>
              </div>
            </div>
            <div className="mt-[7px] ml-[3px] min-h-0 w-[456px] flex-1 border-t-2 border-r border-b border-l-2 border-t-[#404040] border-r-[#f4f2ee] border-b-[#f4f2ee] border-l-[#404040] bg-white">
              {projects.map((p, i) => (
                <ProjectRow key={p.label} label={p.label} open={p.open} index={i} />
              ))}
              {pages.map((label, i) => (
                <PageRow
                  key={label}
                  label={label}
                  last={i === pages.length - 1}
                  bold={label === "60 plc ingangen ch2"}
                  selected={label === "104 plc uitgangen"}
                  cover={i === 0}
                />
              ))}
            </div>
          </div>
          <div className="flex shrink-0 items-start pl-[14px]">
            <div className="relative -mt-[3px] flex h-[27px] w-[42px] items-center rounded-b-[3px] border-r border-b-2 border-l border-r-[#303030] border-b-[#303030] border-l-white bg-[#d4d0c8] pt-[4px] pl-[3px]">Boom</div>
            <div className="grid h-[21px] w-[28px] place-items-center rounded-b-[2px] border-r border-b-2 border-r-[#303030] border-b-[#303030] pt-px text-[#666]">Lijst</div>
          </div>
        </div>

        {/* splitter */}
        <div className="h-[1014px] w-[3px] shrink-0 border-l border-white">
          <div className="ml-px h-full w-[2px] bg-[#303030]" />
        </div>

        {/* vertical toolbar */}
        <div className="w-[40px] shrink-0 pl-[2px]">
          <div className="flex w-[30px] flex-col bg-[#d9d6cf] pt-[6px] pb-[5px]">
            <Grip className="mx-[5px] w-[20px]" />
            <div className="mt-[2px]">
              <VGroups groups={[groupOne, groupTwo, groupThree, groupFour, groupFive]} />
            </div>
            <Grip className="mx-[5px] mt-[10px] w-[20px]" />
            <div className="mt-[3px]">
              <VGroups groups={[groupSix, groupSeven, groupEight, groupNine]} />
            </div>
            <Grip className="mx-[5px] mt-[10px] w-[20px]" />
            <div className="mt-[5px]">
              <VGroups groups={[groupTen, groupEleven]} />
            </div>
          </div>
        </div>

        {/* mdi area */}
        <div className="flex min-w-0 flex-1 flex-col pt-[2px]">
          <div className="flex flex-1 flex-col border-t border-[#808080] pt-[8px]">
            <div className="mr-[6px] flex h-[980px] shrink-0 flex-col border-t-2 border-r-2 border-b-2 border-l border-t-[#f8f8f6] border-r-[#303030] border-b-[#303030] border-l-white pt-[5px] pl-[6px]">
              <div className="flex h-[970px] w-[1377px] shrink-0 flex-col border-t border-l border-white pl-px">
                <div className="flex h-[19px] shrink-0 items-center bg-gradient-to-r from-[#0a246a] to-[#a6caf0] pl-[5px]">
                  <DocIcon />
                  <span className="ml-[5px] text-[12px] font-bold text-white">60</span>
                  <div className="ml-auto">
                    <CapBtns gap="w-px" />
                  </div>
                </div>
                <div className="mt-[2px] ml-[2px] flex min-h-0 flex-1 flex-col border-t border-l border-[#505050]">
                  <div className="flex">
                    <Schematic />
                    <div className="flex w-[15px] shrink-0 flex-col">
                      <ArrowBtn dir="up" className="h-[15px] w-[15px]" />
                      <div className="h-[895px] border border-t-white border-l-white border-r-[#707070] border-b-[#404040]" />
                      <div className="h-[5px]" />
                      <ArrowBtn dir="down" className="h-[15px] w-[15px]" />
                    </div>
                  </div>
                  <div className="flex h-[14px] w-[1357px] shrink-0">
                    <ArrowBtn dir="left" className="h-[14px] w-[15px]" />
                    <div className="flex-1 border border-t-white border-l-white border-r-[#707070] border-b-[#404040]" />
                    <div className="w-px" />
                    <ArrowBtn dir="right" className="h-[14px] w-[16px]" />
                  </div>
                </div>
              </div>
            </div>
            {/* window tab */}
            <div className="flex shrink-0 pl-[7px]">
              <div className="-mt-[2px] flex h-[24px] w-[90px] items-center border-r-2 border-b-2 border-r-[#303030] border-b-[#303030] bg-[#d4d0c8] pl-[2px]">
                <DocIcon />
                <span className="mt-px ml-[33px] text-[11px]">60</span>
              </div>
            </div>
          </div>
        </div>
      </div>

      {/* status bar */}
      <div className="flex h-[19px] shrink-0 border-t border-[#808080] pt-[3px]">
        <div className="flex w-[938px] gap-[14px] pl-px text-[11.4px] leading-[15px]">
          <span>RX: 87,24</span>
          <span>RY: 1,02</span>
        </div>
        <div className="w-[488px] border-l border-[#808080]" />
        <div className="w-[222px] border-l border-[#808080] pl-[3px] leading-[15px]">AAN: 4,00 mm</div>
        <div className="w-[126px] border-l border-[#808080] pl-[2px] leading-[15px]">Logisch 1:1</div>
        <div className="w-[85px] border-l border-[#808080]" />
        <div className="flex-1 border-l border-[#808080]" />
      </div>
    </div>
  );
}
